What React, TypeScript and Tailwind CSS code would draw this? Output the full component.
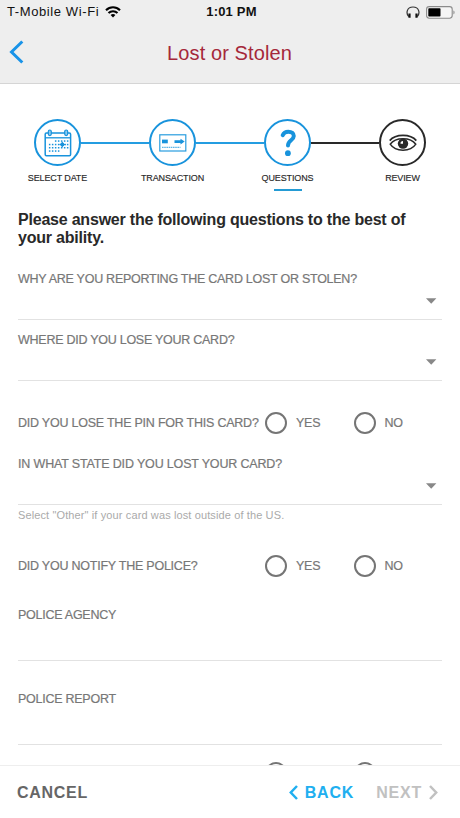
import type { ReactNode } from "react";

function StatusBar() {
  return (
    <div className="flex h-6 items-center pl-[7px] pr-[5px] text-[13px] leading-6 text-[#111]">
      <div className="flex flex-1 items-center gap-[6px]">
        <span className="whitespace-nowrap tracking-[0.6px]">T-Mobile Wi-Fi</span>
        <svg width="16" height="12" viewBox="0 0 16 12" fill="none" stroke="#000" strokeWidth="2.1">
          <path d="M1 4.3C5 .3 11 .3 15 4.3" />
          <path d="M3.5 7C6 4.6 10 4.6 12.5 7" />
          <path d="M5.6 9C7 7.7 9 7.7 10.4 9L8 11.4Z" fill="#000" stroke="none" />
        </svg>
      </div>
      <span className="whitespace-nowrap pl-px font-bold tracking-[0.2px]">1:01 PM</span>
      <div className="flex flex-1 items-center justify-end gap-[6px]">
        <svg width="14" height="13" viewBox="0 0 14 13" fill="none" stroke="#333" strokeWidth="1.2">
          <path d="M2.700 10.500C-.2 7.500.6 1 7 1s7.200 6.500 4.300 9.500" />
          <path d="M3.500 7.500v4.300M10.500 7.500v4.300" stroke="#111" strokeWidth="2.200" />
        </svg>
        <svg width="29" height="13" viewBox="0 0 29 13">
          <rect x=".6" y=".6" width="25.600" height="11.600" rx="2.600" fill="#f5f5f5" stroke="#8b8b8b" strokeWidth="1.100" />
          <rect x="2.300" y="2.300" width="12.200" height="8.300" rx=".8" fill="#000" />
          <path d="M27.300 4.500c1.800.7 1.800 3.200 0 3.900Z" fill="#999" />
        </svg>
      </div>
    </div>
  );
}

function CalendarIcon() {
  const dots = [
    [11, 12], [14, 12], [17, 12], [20, 12], [23, 12],
    [5, 15.500], [8, 15.500], [11, 15.500], [14, 15.500], [20.500, 15.500], [23, 15.500],
    [5, 18.700], [8, 18.700], [11, 18.700], [14, 18.700], [17, 18.700], [20, 18.700], [23, 18.700],
    [5, 22], [8, 22], [11, 22], [14, 22],
  ];
  return (
    <svg width="28" height="28" viewBox="0 0 28 28" fill="none" stroke="#1893dc">
      <rect x="1.200" y="4" width="25.400" height="22.800" rx="1.200" strokeWidth="1.500" />
      <path d="M1 8.800h26" strokeWidth="1.300" />
      <rect x="4.300" y="1" width="3" height="5.600" rx="1.500" fill="#8bcaf0" strokeWidth="1.200" />
      <rect x="20.700" y="1" width="3" height="5.600" rx="1.500" fill="#8bcaf0" strokeWidth="1.200" />
      {dots.map(([x, y]) => (
        <rect key={`${x}-${y}`} x={x - 0.1} y={y - 0.7} width="1.500" height="1.500" fill="#1893dc" stroke="none" />
      ))}
      <circle cx="18.300" cy="15.500" r="2.100" fill="#1893dc" stroke="none" />
      <path d="M15.500 15.500h5.600M18.300 12.700v5.600" strokeWidth="1.200" />
    </svg>
  );
}

function CardIcon() {
  return (
    <svg width="28" height="18" viewBox="0 0 28 18" fill="none" stroke="#299ddf">
      <rect x=".8" y=".8" width="26" height="16.200" strokeWidth="1.200" />
      <rect x="3" y="5.600" width="5.800" height="3.700" fill="#1893dc" stroke="none" />
      <path d="M15.500 6.300h6V4.700l4.200 2.900-4.200 2.900V8.900h-6Z" fill="#1893dc" stroke="none" />
      <path d="M3 13.300h18.500" strokeWidth="1.200" strokeDasharray="1.600 .6" opacity=".75" />
    </svg>
  );
}

function QuestionIcon() {
  return (
    <svg width="18" height="28" viewBox="0 0 18 28" fill="none">
      <path d="M3.700 6.200C4.700 3.600 6.600 2.700 9.300 2.700c3.400 0 5.500 1.700 5.500 4.400 0 4.300-5.800 4.200-5.800 9.300" stroke="#1893dc" strokeWidth="4" strokeLinecap="round" />
      <circle cx="8.900" cy="24.200" r="2.900" fill="#1893dc" />
    </svg>
  );
}

function EyeIcon() {
  return (
    <svg width="28" height="18" viewBox="0 0 28 18" fill="none" stroke="#292929">
      <path d="M.7 6.600C6.500-.4 21.500-.4 27.300 6.600" strokeWidth="1.700" />
      <path d="M1.200 10.200C6.500 2.800 21.500 2.800 26.800 10.200C21.500 18.200 6.500 18.200 1.200 10.200Z" strokeWidth="1.500" />
      <circle cx="14" cy="9.600" r="5.200" fill="#292929" stroke="none" />
      <path d="M14 7v2.700h-2.500C11.500 8 12.300 7 14 7Z" fill="#fff" stroke="none" />
    </svg>
  );
}

function Step({ label, icon, ring, left, right, active }: {
  label: string; icon: ReactNode; ring: string; left: string; right: string; active?: boolean;
}) {
  return (
    <div className="flex w-[115px] flex-col items-center">
      <div className="flex w-full items-center">
        <div className={`h-[2px] flex-1 ${left}`} />
        <div className={`flex size-[47px] items-center justify-center rounded-full border-2 ${ring}`}>{icon}</div>
        <div className={`h-[2px] flex-1 ${right}`} />
      </div>
      <span className="mt-[6px] whitespace-nowrap text-[9px] leading-3 tracking-[-0.13px] text-[#292929] [-webkit-text-stroke:0.15px_#292929]">{label}</span>
      {active && <div className="mt-[5px] h-[2px] w-7 bg-[#249bd4]" />}
    </div>
  );
}

function Label({ children, tracking = "tracking-[-0.26px]" }: { children: ReactNode; tracking?: string }) {
  return <span className={`block whitespace-nowrap text-[12.500px] leading-4 text-[#777] [-webkit-text-stroke:0.2px_#777] ${tracking}`}>{children}</span>;
}

function SelectField({ label, className, tracking }: { label: string; className: string; tracking?: string }) {
  return (
    <div className={`flex flex-col border-b border-[#e2e2e2] ${className}`}>
      <Label tracking={tracking}>{label}</Label>
      <svg className="mt-[11px] mr-[5px] self-end" width="11" height="6" viewBox="0 0 11 6">
        <path d="M0 .2h10.400L5.200 5.800Z" fill="#888" />
      </svg>
    </div>
  );
}

function TextField({ label, className }: { label: string; className: string }) {
  return (
    <div className={`border-b border-[#e2e2e2] ${className}`}>
      <Label>{label}</Label>
    </div>
  );
}

function Radio({ label }: { label?: string }) {
  return (
    <div className="flex w-[88.500px] items-center gap-[9px]">
      <span className="size-[22px] rounded-full border-2 border-[#757575]" />
      {label && <Label>{label}</Label>}
    </div>
  );
}

function RadioRow({ label, className }: { label: string; className: string }) {
  return (
    <div className={`flex h-[22px] items-center ${className}`}>
      <div className="w-[247px]"><Label tracking="tracking-[-0.23px]">{label}</Label></div>
      <Radio label="YES" />
      <Radio label="NO" />
    </div>
  );
}

export default function App() {
  const blue = "bg-[#249de1]";
  return (
    <div className="flex h-[818px] w-[460px] flex-col overflow-hidden bg-white font-['Liberation_Sans',Arial,sans-serif]">
      <header className="h-[84px] shrink-0 border-b border-[#d5d5d5] bg-[#eee]">
        <StatusBar />
        <div className="flex h-[58px] items-center px-[9px]">
          <svg className="-mt-[2px]" width="15" height="24" viewBox="0 0 15 24" fill="none">
            <path d="M13.300 1.500 2.500 12l10.800 10.500" stroke="#1893e8" strokeWidth="3" />
          </svg>
          <h1 className="flex-1 pr-[16px] text-center text-[20px] leading-6 tracking-[0.1px] text-[#a5283a]">Lost or Stolen</h1>
        </div>
      </header>

      <main className="min-h-0 flex-1 overflow-hidden">
        <nav className="flex h-[126px] pt-[35px]">
          <Step label="SELECT DATE" icon={<CalendarIcon />} ring="border-[#1893dc]" left="bg-white" right={blue} />
          <Step label="TRANSACTION" icon={<CardIcon />} ring="border-[#1893dc]" left={blue} right={blue} />
          <Step label="QUESTIONS" icon={<QuestionIcon />} ring="border-[#1893dc]" left={blue} right="bg-[#292929]" active />
          <Step label="REVIEW" icon={<EyeIcon />} ring="border-[#292929]" left="bg-[#292929]" right="bg-white" />
        </nav>
        <div className="px-[18px]">
          <h2 className="w-[410px] pt-px text-[16px] font-bold leading-[18px] tracking-[-0.21px] text-[#292929]">
            Please answer the following questions to the best of your ability.
          </h2>
          <SelectField label="WHY ARE YOU REPORTING THE CARD LOST OR STOLEN?" className="mt-[24px] h-[49px]" />
          <SelectField label="WHERE DID YOU LOSE YOUR CARD?" className="mt-[12px] h-[49px]" />
          <RadioRow label="DID YOU LOSE THE PIN FOR THIS CARD?" className="mt-[31px]" />
          <SelectField label="IN WHAT STATE DID YOU LOST YOUR CARD?" className="mt-[22px] h-[49px]" tracking="tracking-[-0.16px]" />
          <p className="mt-[3px] h-[15px] whitespace-nowrap text-[11px] leading-[14px] tracking-[0.12px] text-[#aaa]">Select "Other" if your card was lost outside of the US.</p>
          <RadioRow label="DID YOU NOTIFY THE POLICE?" className="mt-[32px]" />
          <TextField label="POLICE AGENCY" className="mt-[30px] h-[54px]" />
          <TextField label="POLICE REPORT" className="mt-[30px] h-[54px]" />
          <div className="mt-[17px] flex h-[22px] items-center pl-[247px]">
            <Radio />
            <Radio />
          </div>
        </div>
      </main>

      <footer className="flex h-[53px] shrink-0 items-center border-t border-[#eee] bg-white pl-[17px] pr-[22px] text-[16px] font-bold">
        <button className="flex-1 pt-[2px] text-left tracking-[0.7px] text-[#666]">CANCEL</button>
        <button className="flex items-center gap-[7px] tracking-[0.8px] text-[#20aff0]">
          <svg width="9" height="15" viewBox="0 0 9 15" fill="none"><path d="M8 1 1.800 7.500 8 14" stroke="currentColor" strokeWidth="2.500" /></svg>
          <span className="pt-[2px]">BACK</span>
        </button>
        <button className="ml-[22px] flex items-center gap-[7px] tracking-[0.8px] text-[#c1c1c1]">
          <span className="pt-[2px]">NEXT</span>
          <svg width="9" height="15" viewBox="0 0 9 15" fill="none"><path d="m1 1 6.200 6.500L1 14" stroke="currentColor" strokeWidth="2.500" /></svg>
        </button>
      </footer>
    </div>
  );
}
